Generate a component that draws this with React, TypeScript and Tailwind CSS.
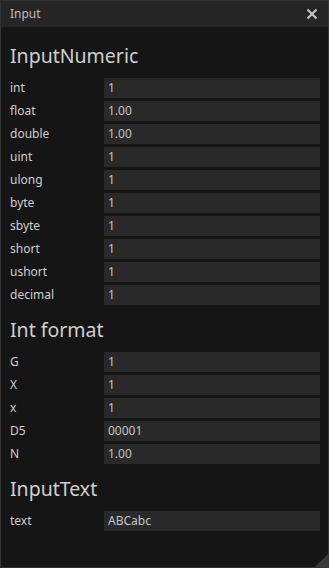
import React from "react";

const font = { fontFamily: '"Noto Sans", "Open Sans", sans-serif' };

function Row({ label, value }: { label: string; value: string }) {
  return (
    <div className="flex items-center h-[20px] mb-[3px]">
      <div className="w-[103px] pl-[9px] text-[12px] text-[#cfcfcf] leading-none">{label}</div>
      <div className="w-[216px] h-[20px] bg-[#292929] flex items-center pl-[4px] text-[12px] text-[#c4c4c4] leading-none">
        {value}
      </div>
    </div>
  );
}

function Header({ text }: { text: string }) {
  return (
    <div className="h-[44px] flex items-center pl-[9px] text-[19.5px] text-[#cfcfcf] leading-none">
      {text}
    </div>
  );
}

export default function App() {
  const numeric: [string, string][] = [
    ["int", "1"],
    ["float", "1.00"],
    ["double", "1.00"],
    ["uint", "1"],
    ["ulong", "1"],
    ["byte", "1"],
    ["sbyte", "1"],
    ["short", "1"],
    ["ushort", "1"],
    ["decimal", "1"],
  ];
  const fmt: [string, string][] = [
    ["G", "1"],
    ["X", "1"],
    ["x", "1"],
    ["D5", "00001"],
    ["N", "1.00"],
  ];
  return (
    <div style={font} className="w-[329px] h-[568px] bg-[#151515] border border-[#333333] relative overflow-hidden flex flex-col">
      <div className="h-[26px] bg-[#262626] flex items-center justify-between pl-[9px] pr-[9px] shrink-0">
        <span className="text-[12px] text-[#bdbdbd] leading-none">Input</span>
        <svg width="12" height="12" viewBox="0 0 12 12" className="mr-[1px]">
          <path d="M1.5 1.5 L10.5 10.5 M10.5 1.5 L1.5 10.5" stroke="#c8c8c8" strokeWidth="2" />
        </svg>
      </div>
      <div className="pt-[7px]">
        <Header text="InputNumeric" />
        {numeric.map(([l, v]) => (
          <Row key={l} label={l} value={v} />
        ))}
        <Header text="Int format" />
        {fmt.map(([l, v]) => (
          <Row key={l} label={l} value={v} />
        ))}
        <Header text="InputText" />
        <Row label="text" value="ABCabc" />
      </div>
      <div className="absolute right-0 bottom-0 w-0 h-0 border-l-[13px] border-l-transparent border-b-[13px] border-b-[#3a3a3a]" />
    </div>
  );
}
